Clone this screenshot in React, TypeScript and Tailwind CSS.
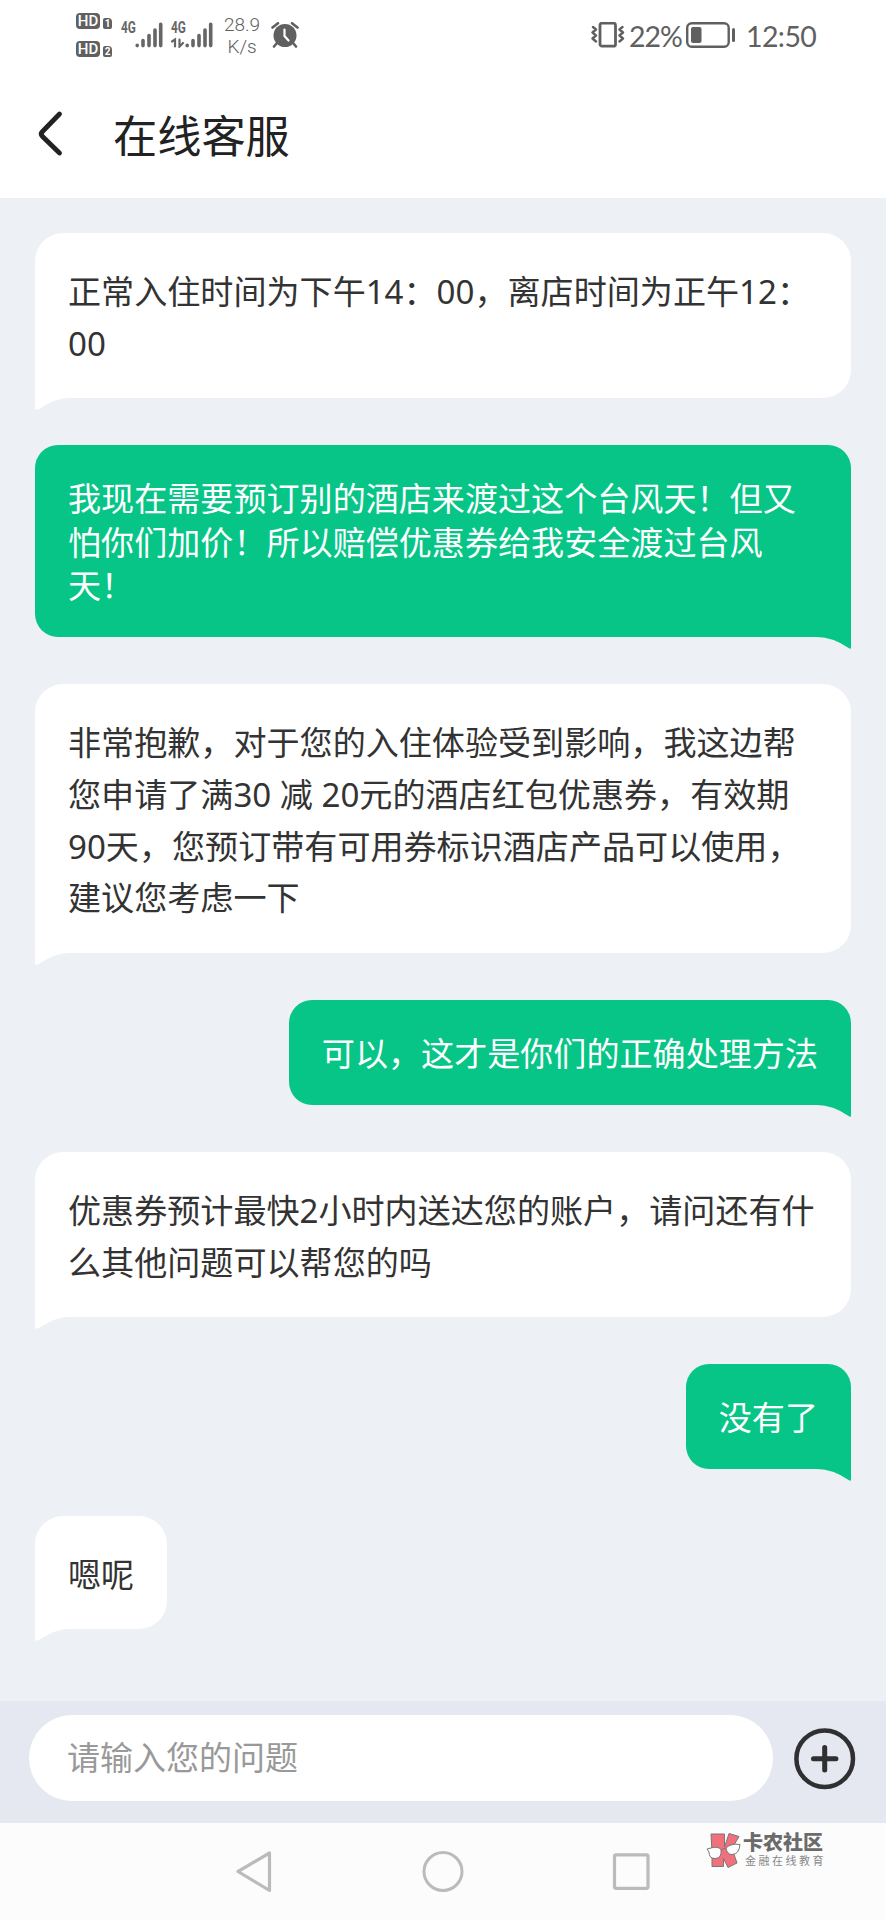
import React from 'react';

const messages = [
    { id: 1, isMine: false, lines: ['正常入住时间为下午14：00，离店时间为正午12：', '00'] },
    {
        id: 2,
        isMine: true,
        lines: ['我现在需要预订别的酒店来渡过这个台风天！但又', '怕你们加价！所以赔偿优惠券给我安全渡过台风', '天！'],
    },
    {
        id: 3,
        isMine: false,
        lines: [
            '非常抱歉，对于您的入住体验受到影响，我这边帮',
            '您申请了满30 减 20元的酒店红包优惠券，有效期',
            '90天，您预订带有可用券标识酒店产品可以使用，',
            '建议您考虑一下',
        ],
    },
    { id: 4, isMine: true, lines: ['可以，这才是你们的正确处理方法'] },
    { id: 5, isMine: false, lines: ['优惠券预计最快2小时内送达您的账户，请问还有什', '么其他问题可以帮您的吗'] },
    { id: 6, isMine: true, lines: ['没有了'] },
    { id: 7, isMine: false, lines: ['嗯呢'] },
];

const HdBadge = ({ sim }: any) => (
    <div className="flex items-end gap-[3px]">
        <span className="flex h-4 w-6 items-center justify-center rounded-[4px] bg-[#606060] font-['Roboto'] text-[15px] leading-none font-medium text-white">
            HD
        </span>
        <span className="flex h-[11px] w-[9px] items-center justify-center rounded-[2px] rounded-tr-[4px] bg-[#606060] font-['Roboto'] text-[10px] leading-none font-bold text-white">
            {sim}
        </span>
    </div>
);

const Signal = ({ hasData }: any) => (
    <div className="relative h-[26px] w-[42px]">
        <span className="absolute -top-px left-0 font-['Roboto'] text-[16.5px] leading-[14px] font-bold text-[#666]">
            <span className="inline-block origin-left scale-x-[0.72]">4G</span>
        </span>
        <svg viewBox="0 0 42 26" className="absolute inset-0 h-full w-full" fill="none" stroke="#666" strokeWidth="3.6" strokeLinecap="round">
            <path d="M16.2 23.4v.2M22 18.500v5.100M28 13.500v10.100M34 8v15.600M39.700 2.200v21.400" />
            {hasData && <path d="M1 19.500l3-2v7M8.500 17.500v7l3.500-3.500" strokeWidth="2.200" />}
        </svg>
    </div>
);

const StatusBar = () => (
    <div className="flex h-[70px] items-start pr-[71px] pl-[76px] text-[#606060]">
        <div className="mt-[13px] flex flex-col gap-[12px]">
            <HdBadge sim="1" />
            <HdBadge sim="2" />
        </div>
        <div className="mt-[22px] ml-[9px] flex gap-[8px]">
            <Signal />
            <Signal hasData />
        </div>
        <div className="mt-[14px] ml-[9px] w-[40px] text-center font-['Roboto'] text-[19px] leading-[22px] font-light">
            <div>28.9</div>
            <div>K/s</div>
        </div>
        <svg viewBox="0 0 28 26" className="mt-[22px] ml-[8.500px] h-[26px] w-[28px]" fill="none" strokeLinecap="round" strokeLinejoin="round">
            <circle cx="14" cy="13.500" r="11.500" fill="#606060" />
            <path d="M1.500 5.500L7 1.200M26.500 5.500L21 1.200M6 21l-3 3.500M22 21l3 3.500" stroke="#606060" strokeWidth="2.600" />
            <path d="M13.500 7.500v6.500l4 4.500" stroke="#fff" strokeWidth="2.200" />
        </svg>
        <svg viewBox="0 0 34 26" className="mt-[21.500px] ml-auto h-[26px] w-[34px]" fill="none" stroke="#606060" strokeLinecap="round" strokeLinejoin="round">
            <rect x="9" y="1.200" width="15.500" height="23" rx="2" strokeWidth="2.800" />
            <path d="M2 5l3 2.500-3.500 3 3.500 3-3.500 3L5 19.500M31.500 5l-3 2.500 3.500 3-3.500 3 3.500 3-3.500 3" strokeWidth="2.400" />
        </svg>
        <span className="mt-[18px] ml-[4px] w-[54px] font-['Lato'] text-[28.500px] leading-[36px] tracking-[-1px]">22%</span>
        <svg viewBox="0 0 50 26" className="mt-[22px] ml-[3px] h-[26px] w-[50px]" fill="none" stroke="#606060">
            <rect x="1.200" y="1.200" width="41.500" height="23.600" rx="4.500" strokeWidth="2.400" />
            <rect x="5" y="5" width="10.500" height="16" rx="2" fill="#606060" stroke="none" />
            <path d="M47.500 7.500v11" strokeWidth="3" strokeLinecap="round" />
        </svg>
        <span className="mt-[18px] ml-[10px] w-[69px] font-['Lato'] text-[28.500px] leading-[36px] tracking-[-0.600px] whitespace-nowrap">12:50</span>
    </div>
);

const Bubble = ({ isMine, lines }: any) => {
    const width = lines.length > 1 ? 'w-full' : '';

    return (
        <div
            className={
                isMine
                    ? `relative self-end rounded-[23px] rounded-br-none bg-[#07c586] px-[33px] pt-[32px] pb-[29.400px] text-white ${width}`
                    : `relative self-start rounded-[28px] rounded-bl-none bg-white px-[33px] pt-[33px] pb-[28.400px] text-[#333] ${width}`
            }
        >
            {lines.map((line: string) => (
                <p key={line} className={isMine ? 'text-[33.100px] leading-[43.400px] whitespace-pre' : 'text-[33.100px] leading-[51.800px] whitespace-pre'}>
                    {line}
                </p>
            ))}
            {isMine ? (
                <svg viewBox="0 0 34 13" className="absolute right-0 -bottom-3 h-[13px] w-[34px]" fill="#07c586">
                    <path d="M0 0h34v12q0 1-1.500 .500Q16 1 0 1z" />
                </svg>
            ) : (
                <svg viewBox="0 0 34 13" className="absolute -bottom-3 left-0 h-[13px] w-[34px]" fill="#fff">
                    <path d="M34 0H0v12q1 1 4 0Q20 1 34 1z" />
                </svg>
            )}
        </div>
    );
};

const NavBar = () => (
    <div className="relative h-[97px] bg-[#fcfcfc]">
        <div className="flex items-center pt-[27px] pl-[234px]">
            <svg viewBox="0 0 40 44" className="h-[44px] w-[40px]" fill="none" stroke="#bbb" strokeWidth="3.200" strokeLinejoin="round">
                <path d="M35.500 3v37.500L4 21.500z" />
            </svg>
            <svg viewBox="0 0 44 44" className="ml-[147px] h-[44px] w-[44px]" fill="none" stroke="#bbb" strokeWidth="3">
                <circle cx="22" cy="21.500" r="19" />
            </svg>
            <svg viewBox="0 0 44 44" className="ml-[144px] h-[44px] w-[44px]" fill="none" stroke="#bbb" strokeWidth="3.200">
                <rect x="5.500" y="4.800" width="33.500" height="33.500" rx="1.500" />
            </svg>
        </div>
        <div className="absolute top-[9px] left-[706px] flex">
            {/* K with glasses */}
            <svg viewBox="0 0 36 38" className="h-[38px] w-[36px]" stroke="#777" strokeWidth="1" strokeLinejoin="round">
                <path d="M5 2h13.500v13L23 1.500l10 3-7 12 5 14.500-9 4.500-4.500-9v8H6V21z" fill="#f0717c" />
                <path d="M1 17l4-1q7-2 10 1.500 1 9-6 9-6 0-6-6.500z" fill="#fff" />
                <path d="M20 16q5-5 14-3.500-1 10-8 10-5 0-6-6.500l-4.500 1.500" fill="#fff" />
            </svg>
            <div className="ml-[1px] w-[84px] whitespace-nowrap">
                <div className="text-[20px] leading-[22px] font-black text-[#6b6b6b]">卡农社区</div>
                <div className="ml-[2px] text-[11px] leading-[14px] tracking-[2.500px] text-[#888]">金融在线教育</div>
            </div>
        </div>
    </div>
);

const App = () => {
    return (
        <div className="flex h-[1920px] w-[886px] flex-col overflow-hidden bg-[#edf0f5] font-['Noto_Sans','Noto_Sans_CJK_SC',sans-serif]">
            <header className="h-[197.500px] bg-white">
                <StatusBar />
                <div className="flex h-[128px] items-center pl-[36px]">
                    <svg viewBox="0 0 28 48" className="h-[48px] w-[28px]" fill="none" stroke="#222" strokeWidth="4.800" strokeLinecap="round" strokeLinejoin="round">
                        <path d="M23.500 4L6.500 21.500q-2.500 2.500 0 5L23.500 43" />
                    </svg>
                    <h1 className="mt-[3px] ml-[49px] text-[44.200px] leading-[60px] text-[#222]">在线客服</h1>
                </div>
            </header>

            <main className="flex flex-1 flex-col gap-[47.200px] px-[35px] pt-[35.500px]">
                {messages.map((item) => (
                    <Bubble key={item.id} isMine={item.isMine} lines={item.lines} />
                ))}
            </main>

            <footer>
                <div className="flex h-[122px] items-start bg-[#e5e8f0] pt-[14px] pl-[29px]">
                    <div className="flex h-[86px] w-[744px] items-center rounded-full bg-white pl-[38px] text-[33px] text-[#999]">请输入您的问题</div>
                    <svg viewBox="0 0 64 64" className="mt-[12px] ml-[20px] h-[64px] w-[64px]" fill="none" stroke="#303033" strokeWidth="4.500" strokeLinecap="round">
                        <circle cx="31.700" cy="31.700" r="28.300" />
                        <path d="M20.500 31.700h22.400M31.700 20.500v22.400" strokeWidth="5" />
                    </svg>
                </div>
                <NavBar />
            </footer>
        </div>
    );
};

export default App;
